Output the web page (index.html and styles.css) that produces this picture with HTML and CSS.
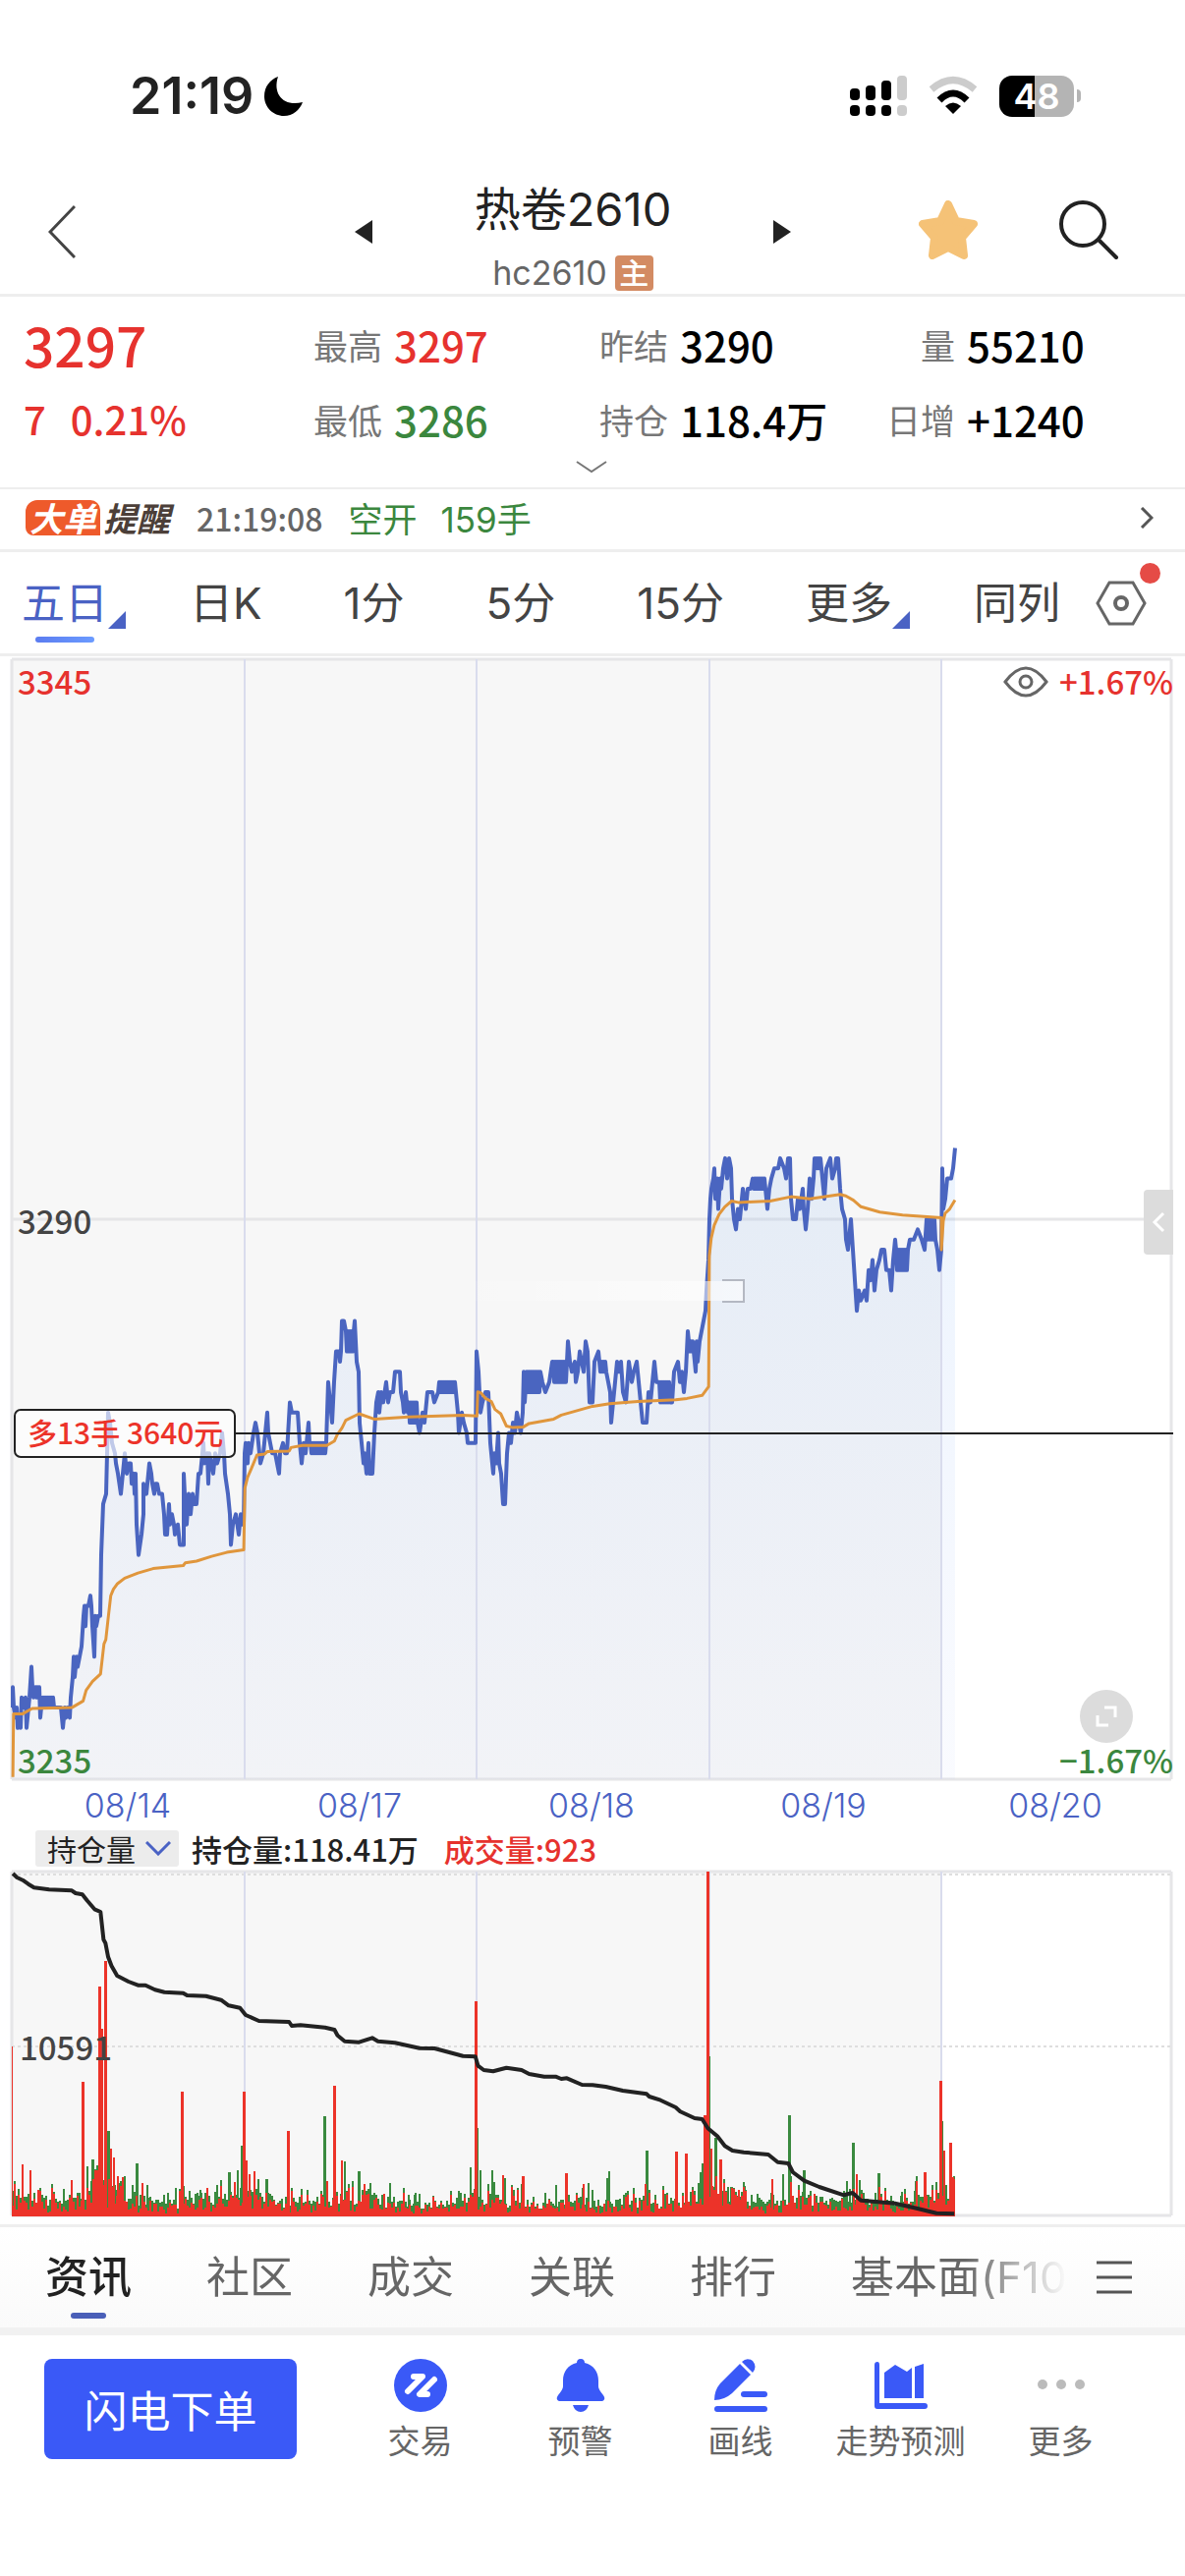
FILE: index.html
```html
<!DOCTYPE html>
<html lang="zh-CN">
<head>
<meta charset="utf-8">
<meta name="viewport" content="width=device-width">
<title>热卷2610</title>
<link rel="stylesheet" href="styles.css">
</head>
<body>
<div class="status">
  <div class="status-side">
    <span class="clock">21:19</span>
    <svg width="40" height="40" viewBox="0 0 40 40"><path d="M14 0C8 18 20 31 39 26C36 34 29 40 20 40C9 40 0 31 0 20C0 10 6 3 14 0Z"/></svg>
  </div>
  <div class="status-side status-right">
    <svg width="58" height="42" viewBox="0 0 58 42"><g><rect x="0" y="13" width="10" height="12" rx="4"/><rect x="16" y="10" width="10" height="15" rx="4"/><rect x="32" y="5" width="10" height="20" rx="4"/><rect x="0" y="30" width="10" height="11" rx="4"/><rect x="16" y="30" width="10" height="11" rx="4"/><rect x="32" y="30" width="10" height="11" rx="4"/></g><g fill="#ccc"><rect x="48" y="0" width="10" height="25" rx="4"/><rect x="48" y="30" width="10" height="11" rx="4"/></g></svg>
    <svg width="50" height="42" viewBox="0 0 50 42"><g fill="none" stroke-width="7"><path d="M3 14Q25-5 47 14" stroke="#ccc"/><path d="M11 25Q25 11 39 25" stroke="#000"/></g><path d="M25 39L17 31Q25 24 33 31Z"/></svg>
    <div class="battery">48</div>
  </div>
</div>

<header class="top">
  <button class="icon-btn back" aria-label="返回"><svg width="28" height="56" viewBox="0 0 28 56"><path d="M27 2L2 28L27 54" fill="none" stroke="#444" stroke-width="3"/></svg></button>
  <div class="switcher">
    <button class="icon-btn" aria-label="上一个"><svg width="18" height="24" viewBox="0 0 18 24"><path d="M18 0V24L0 12Z" fill="#222"/></svg></button>
    <div class="names">
      <h1>热卷2610</h1>
      <p>hc2610 <span class="main-tag">主</span></p>
    </div>
    <button class="icon-btn" aria-label="下一个"><svg width="18" height="24" viewBox="0 0 18 24"><path d="M0 0V24L18 12Z" fill="#222"/></svg></button>
  </div>
  <button class="icon-btn star" aria-label="自选"><svg width="60" height="60" viewBox="0 0 60 60"><path d="M30 4L38 21L56 24L44 38L46 56L30 48L14 56L16 38L4 24L22 21Z" fill="#f5c277" stroke="#f5c277" stroke-width="8" stroke-linejoin="round"/></svg></button>
  <button class="icon-btn" aria-label="搜索"><svg width="62" height="62" viewBox="0 0 62 62"><g fill="none" stroke="#222" stroke-width="4" stroke-linecap="round"><circle cx="25" cy="25" r="22"/><path d="M42 42L59 59"/></g></svg></button>
</header>

<section class="quote">
  <dl class="grid">
    <div class="last up">3297</div>
    <div><dt>最高</dt><dd class="up">3297</dd></div>
    <div><dt>昨结</dt><dd>3290</dd></div>
    <div class="end"><dt>量</dt><dd>55210</dd></div>
    <div class="chg up"><span>7</span><span>0.21%</span></div>
    <div><dt>最低</dt><dd class="down">3286</dd></div>
    <div><dt>持仓</dt><dd>118.4万</dd></div>
    <div class="end"><dt>日增</dt><dd>+1240</dd></div>
  </dl>
  <button class="icon-btn unfold" aria-label="展开"><svg width="32" height="13" viewBox="0 0 32 13"><path d="M1 1L16 11L31 1" fill="none" stroke="#777" stroke-width="2"/></svg></button>
</section>

<a class="alert" href="#orders">
  <span class="logo"><b class="logo-a">大单</b><b class="logo-b">提醒</b></span>
  <span class="time">21:19:08</span>
  <span class="down">空开</span>
  <span class="down">159手</span>
  <svg class="go" width="14" height="22" viewBox="0 0 14 22"><path d="M2 1L12 11L2 21" fill="none" stroke="#555" stroke-width="3"/></svg>
</a>

<div class="periods">
  <div class="period-list">
    <button class="on fold">五日</button><button>日K</button><button>1分</button><button>5分</button><button>15分</button><button class="fold">更多</button><button>同列</button>
  </div>
  <button class="icon-btn gear" aria-label="设置"><svg width="52" height="46" viewBox="0 0 52 46"><g fill="none" stroke="#666"><path d="M14 2H38L50 23L38 44H14L2 23Z" stroke-width="3"/><circle cx="26" cy="23" r="6" stroke-width="4"/></g></svg></button>
</div>

<main>
  <div class="price">
    <svg class="plot" viewBox="0 667 1206 1145" role="img" aria-label="五日分时">
      <defs>
        <linearGradient id="area" x1="0" y1="1170" x2="0" y2="1810" gradientUnits="userSpaceOnUse"><stop offset="0" stop-color="#3c8cf0" stop-opacity=".1"/><stop offset="1" stop-color="#5078f0" stop-opacity=".03"/></linearGradient>
        <linearGradient id="streak"><stop offset="0" stop-color="#fff" stop-opacity="0"/><stop offset="1" stop-color="#fff" stop-opacity=".6"/></linearGradient>
      </defs>
      <rect x="12" y="669" width="946" height="1141" fill="#f7f7f7"/>
      <path class="rule" d="M12 670H1192M12 1810H1192M12 1240H1192M12 670V1810M1192 670V1810"/>
      <path id="fill" fill="url(#area)"/>
      <path class="day-rule" d="M249 670V1810M485 670V1810M722 670V1810M958 670V1810"/>
      <path id="line" class="line"/>
      <path id="avg" class="avg"/>
      <rect x="450" y="1303" width="306" height="20" fill="url(#streak)"/>
      <path d="M735 1302H758M757 1302V1324M735 1324H758" stroke="#b4b8c2" stroke-width="2" fill="none"/>
      <path d="M240 1458H1194" stroke="#222" stroke-width="2"/>
      <rect x="15" y="1434" width="224" height="48" rx="6" fill="#fff" fill-opacity=".65" stroke="#222" stroke-width="2"/>
      <text x="28" y="1469" class="pos">多13手 3640元</text>
      <text x="18" y="706" class="axis up">3345</text>
      <text x="18" y="1255" class="axis">3290</text>
      <text x="18" y="1804" class="axis down">3235</text>
      <text x="1194" y="706" class="axis up right">+1.67%</text>
      <text x="1194" y="1804" class="axis down right">−1.67%</text>
      <g fill="none" stroke="#666" stroke-width="3"><path d="M1023 693Q1044 665 1065 693Q1044 721 1023 693Z"/><circle cx="1044" cy="693" r="6"/></g>
    </svg>
    <button class="handle" aria-label="侧栏"><svg width="14" height="22" viewBox="0 0 14 22"><path d="M12 2L3 11L12 20" fill="none" stroke="#fff" stroke-width="3"/></svg></button>
    <button class="expand" aria-label="全屏"><svg width="22" height="22" viewBox="0 0 22 22"><path d="M9 2H20V12M2 10V20H13" fill="none" stroke="#fff" stroke-width="3"/></svg></button>
  </div>
  <div class="days"><span>08/14</span><span>08/17</span><span>08/18</span><span>08/19</span><span>08/20</span></div>
  <div class="vol-head">
    <label class="chip"><select aria-label="指标"><option>持仓量</option></select><svg width="26" height="15" viewBox="0 0 26 15"><path d="M1 1L13 13L25 1" fill="none" stroke="#4a62c4" stroke-width="3"/></svg></label>
    <span>持仓量:118.41万</span>
    <span class="up">成交量:923</span>
  </div>
  <svg class="plot" viewBox="0 1903 1206 360" role="img" aria-label="成交量">
    <rect x="12" y="1904" width="946" height="351" fill="#f7f7f7"/>
    <path class="rule" d="M12 1904H1192M12 2254H1192M12 1904V2254M1192 1904V2254"/>
    <path class="dots" d="M12 1907H1192M12 2082H1192"/>
    <path class="day-rule" d="M249 1904V2254M485 1904V2254M722 1904V2254M958 1904V2254"/>
    <path id="volDown" fill="#3a8a3f"/>
    <path id="volUp" fill="#ec3329"/>
    <path id="oi" class="oi"/>
    <text x="20" y="2096" class="axis">10591</text>
  </svg>
</main>

<nav class="sections">
  <div class="section-list">
    <a class="on" href="#news">资讯</a><a href="#community">社区</a><a href="#trades">成交</a><a href="#related">关联</a><a href="#rank">排行</a><a href="#f10">基本面(F10)</a>
  </div>
  <button class="icon-btn" aria-label="菜单"><svg width="36" height="34" viewBox="0 0 36 34"><path d="M0 2H36M0 17H36M0 32H36" stroke="#555" stroke-width="3"/></svg></button>
</nav>

<footer class="actions">
  <button class="order">闪电下单</button>
  <a href="#trade"><svg width="54" height="54" viewBox="0 0 54 54"><circle cx="27" cy="27" r="27" fill="#3a59f7"/><path d="M20 18H29L14 33M41 21L26 36H34" fill="none" stroke="#fff" stroke-width="6" stroke-linecap="round" stroke-linejoin="round"/></svg>交易</a>
  <a href="#warn"><svg width="54" height="54" viewBox="0 0 54 54"><path d="M27 0C30 0 31 2 31 4C40 6 45 13 45 22V28Q45 31 50 37C53 41 50 43 48 43H6C4 43 1 41 4 37Q9 31 9 28V22C9 13 14 6 23 4C23 2 24 0 27 0ZM19 47H35Q33 54 27 54Q21 54 19 47Z" fill="#3a59f7"/></svg>预警</a>
  <a href="#draw"><svg width="54" height="54" viewBox="0 0 54 54"><g fill="#3a59f7"><path d="M26 5L37 16L18 35Q10 42 0 42Q0 32 6 25ZM28 3Q33-2 39 2Q44 8 39 14Z"/><rect x="27" y="33" width="27" height="6" rx="3"/><rect x="0" y="48" width="54" height="6" rx="3"/></g></svg>画线</a>
  <a href="#trend"><svg width="54" height="54" viewBox="0 0 54 54"><g fill="#3a59f7"><path d="M0 6Q0 3 3 3Q5 3 5 6V45H51Q54 45 54 48Q54 51 51 51H3Q0 51 0 48Z"/><path d="M10 14L21 6L33 13L38 9V40H10Z"/><path d="M41 8L50 5V40H41Z"/></g></svg>走势预测</a>
  <a href="#more"><svg width="54" height="54" viewBox="0 0 54 54"><g fill="#bbb"><circle cx="8" cy="26" r="5"/><circle cx="27" cy="26" r="5"/><circle cx="46" cy="26" r="5"/></g></svg>更多</a>
</footer>
<script src="chart.js"></script>
</body>
</html>
```
FILE: styles.css
```css
* { box-sizing: border-box; }
body, h1, p, dl, dd { margin: 0; }
body {
  background: #fff;
  color: #222;
  font-family: Inter, "Noto Sans CJK SC", sans-serif;
}
button, select { font: inherit; color: inherit; border: 0; background: none; padding: 0; }
a { color: inherit; text-decoration: none; }
svg { display: block; flex: none; }
.icon-btn { display: flex; position: relative; }
.up { color: #e6322e; fill: #e6322e; }
.down { color: #3b873e; fill: #3b873e; }

.status { display: flex; justify-content: space-between; align-items: center; height: 182px; padding: 14px 113px 0 132px; }
.status-side { display: flex; align-items: center; gap: 11px; }
.status-right { gap: 22px; }
.clock { font-size: 52px; font-weight: 600; line-height: 60px; }
.battery {
  position: relative; width: 76px; height: 42px; border-radius: 13px;
  background: linear-gradient(90deg, #000 48%, #b4b4b4 48%);
  color: #fff; font-size: 36px; font-weight: 600; line-height: 42px; text-align: center;
}
.battery::after { content: ""; position: absolute; right: -7px; top: 14px; width: 4px; height: 13px; border-radius: 0 4px 4px 0; background: #b4b4b4; }

.top { display: flex; align-items: center; height: 120px; padding: 0 67px 14px 49px; border-bottom: 3px solid #eee; }
.top .star { margin-right: 82px; }
.switcher { flex: 1; display: flex; align-items: center; justify-content: center; gap: 104px; padding: 4px 0 0 220px; margin-right: 66px; }
.back { padding-top: 4px; }
.names { text-align: center; padding-top: 6px; white-space: nowrap; }
.names h1 { font-size: 47px; font-weight: 400; line-height: 68px; }
.names p { display: flex; justify-content: center; align-items: center; gap: 8px; font-size: 34px; line-height: 40px; color: #666; margin-top: 11px; }
.main-tag { width: 39px; height: 36px; border-radius: 4px; background: #d38b63; color: #fff; font-size: 30px; font-weight: 500; line-height: 36px; text-align: center; }

.quote { padding: 10px 106px 14px 24px; border-bottom: 2px solid #eee; }
.grid { display: grid; grid-template-columns: 295px 291px 1fr auto; grid-auto-rows: 76px; align-items: center; }
.grid > div { display: flex; align-items: center; gap: 12px; font-family: "Noto Sans CJK SC", sans-serif; font-size: 42px; font-weight: 500; }
.grid dt { font-size: 35px; font-weight: 400; color: #777; }
.grid dd:not([class]) { color: #000; }
.grid .end { display: grid; grid-template-columns: 1fr 116px; text-align: right; }
.grid .end dd { text-align: left; }
.grid .last { font-size: 55px; }
.grid .chg { gap: 25px; font-size: 40px; }
.quote .unfold { margin: 5px auto 0; left: 40px; width: 32px; }

.alert { display: flex; align-items: center; height: 64px; padding: 0 32px 4px 26px; border-bottom: 3px solid #eee; font-size: 35px; }
.logo { display: flex; align-items: center; gap: 3px; font-family: "Noto Sans CJK SC", sans-serif; font-style: italic; font-size: 34px; line-height: 36px; font-weight: 700; }
.logo-a { width: 76px; text-align: center; color: #fff; background: #ee5a2b; border-radius: 12px 10px 0 8px; font-weight: 700; }
.logo-b { color: #4c3f39; font-weight: 700; }
.time { margin: 0 26px 0 27px; font-family: "Noto Sans CJK SC", sans-serif; font-size: 32px; font-weight: 500; color: #666; }
.time + .down { margin-right: 24px; }
.go { margin-left: auto; }

.periods { display: flex; align-items: center; gap: 36px; height: 106px; padding: 0 39px 0 22px; border-bottom: 3px solid #eee; }
.period-list { flex: 1; display: flex; justify-content: space-between; font-size: 44px; line-height: 64px; color: #444; }
.period-list button { position: relative; }
.period-list .on { color: #4a62c4; }
.on::before { content: ""; position: absolute; left: 14px; bottom: -8px; width: 60px; height: 6px; border-radius: 3px; background: linear-gradient(90deg, #5b7cf0, #6b9bff); }
.fold::after { content: ""; position: absolute; right: -18px; bottom: 6px; border-left: 18px solid transparent; border-bottom: 18px solid #4a62c4; }
.gear::after { content: ""; position: absolute; right: -14px; top: -18px; width: 21px; height: 21px; border-radius: 50%; background: #e54b46; }

.price { position: relative; }
.plot { width: 100%; height: auto; overflow: visible; }
.rule { fill: none; stroke: #e6e6e8; stroke-width: 3; }
.day-rule { stroke: #d9dced; stroke-width: 2; }
.dots { stroke: #dedede; stroke-width: 2; stroke-dasharray: 3 3; }
.line { fill: none; stroke: #4a65c0; stroke-width: 4; stroke-linejoin: round; }
.avg { fill: none; stroke: #e0963c; stroke-width: 3; stroke-linejoin: round; }
.oi { fill: none; stroke: #222; stroke-width: 4; stroke-linejoin: round; }
.axis { font: 500 33px "Noto Sans CJK SC", sans-serif; }
.axis:not(.up):not(.down) { fill: #444; }
.right { text-anchor: end; }
.pos { font: 500 30px "Noto Sans CJK SC", sans-serif; fill: #ec3329; }
.handle, .expand { position: absolute; display: flex; align-items: center; justify-content: center; background: #dcdcdc; }
.handle { right: 12px; top: 543px; width: 30px; height: 66px; border-radius: 4px 0 0 4px; }
.expand { right: 53px; bottom: 39px; width: 54px; height: 54px; border-radius: 50%; }
.days { display: grid; grid-template-columns: repeat(5, 1fr); padding: 0 14px 0 12px; font-size: 34px; font-weight: 300; line-height: 50px; text-align: center; color: #4a62c4; }
.vol-head { display: flex; align-items: center; height: 41px; padding: 0 0 4px 36px; font: 500 31px/40px "Noto Sans CJK SC", sans-serif; }
.vol-head > span { margin-right: 26px; }
.chip { display: flex; align-items: center; gap: 10px; height: 37px; margin-right: 13px; padding: 0 8px 0 12px; border-radius: 3px; background: #ececec; }
.chip select { appearance: none; font: 400 30px/37px "Noto Sans CJK SC", sans-serif; }

.sections { display: flex; align-items: center; gap: 30px; height: 113px; padding: 0 54px 0 46px; border-top: 3px solid #eee; border-bottom: 8px solid #f1f1f1; background: linear-gradient(#fff, #fafafa); }
.section-list { flex: 1; min-width: 0; display: flex; gap: 76px; overflow: hidden; line-height: 102px; font-size: 44px; white-space: nowrap; color: #666; mask-image: linear-gradient(90deg, #000 90%, transparent); }
.section-list .on { position: relative; color: #222; font-weight: 500; }
.section-list .on::before { left: 26px; bottom: 9px; width: 36px; background: #4a5fb8; }

.actions { display: flex; align-items: flex-start; padding: 24px 45px 119px; }
.actions a { flex: 1; display: flex; flex-direction: column; align-items: center; gap: 6px; font-size: 33px; line-height: 48px; color: #666; white-space: nowrap; }
.order { width: 257px; height: 102px; margin-right: 44px; border-radius: 8px; background: #3a59f7; color: #fff; font-size: 44px; }
```
FILE: chart.js
```js
// Price series: "x price" pairs, price counted from 3200.
// "x1~x2 low high" marks a stretch where the price flips between two ticks.
const price = `13 42,13 44,14 42,16 41,17 42,18 40,20 41,21 40,22 43,24 42,26 43,27 40,29 42,30 43,32 46,33 44,34 43,36 44,37 43,38 44,39 43,40 44,41 41,42 42,
42~55 42 43,62 42,64 40,66 42,67 41,69 42,71 41,72 43,74 45,75 47,76 45,78 47,79 46,81 47,83 48,85 51,86 52,87 50,88 52,90 52,92 53,93 52,94 50,96 47,97 51,98 50,100 51,102 51,103 57,105 62,108 63,109 67,110 71,112 70,114 68,117 67,118 66,120 65,123 63,126 66,127 67,129 65,131 66,133 66,134 64,136 65,137 63,138 65,139 60,141 57,144 59,146 61,146 64,149 63,150 64,152 66,154 65,155 64,157 63,158 64,160 64,162 63,165 63,167 61,168 59,170 59,172 62,173 60,175 61,177 60,178 59,181 60,183 58,187 58,187 65,188 63,190 60,192 63,194 61,196 63,198 62,200 62,202 65,204 65,206 67,207 68,208 66,211 67,212 64,213 67,215 66,217 65,219 67,221 66,224 67,226 69,228 67,229 65,232 63,234 61,235 58,237 60,240 61,243 59,245 61,247 60,248 60,
249 67,250 68,252 66,253 68,255 67,258 69,260 70,262 69,263 68,265 66,268 67,270 69,272 71,273 69,275 68,277 67,280 67,282 66,284 65,285 67,288 68,290 67,292 67,295 72,297 71,303 71,305 68,307 66,309 68,311 67,314 70,315 68,316~332 67 68,334 74,336 72,338 70,340 74,342 77,345 77,346 76,347 77,348 80,350 80,352~360 77 79,361 80,363 76,365 75,366 70,368 68,370 66,371 67,373 65,375 68,376 65,379 65,381 69,383 72,385 73,386 71,388 73,390 72,393 74,395 72,397 73,400 73,402 75,407 75,408 73,410 72,411 71,413 73,415 71,416~425 70 72,427 69,430 71,432 70,434 72,435 73,440 73,442 72,446 73,447~464 73 74,466 71,467 69,470 71,472 70,475 69,476 68,484 68,485 77,
487 75,488 73,489 71,491 72,494 73,497 73,499 68,500 67,502 65,503 67,505 66,507 69,508 66,510 65,512 62,514 62,516 67,518 69,520 68,522 70,524 69,526 71,528 70,530 69,532 71,533 75,534 72,536~550 73 75,552 74,555 73,559 74,562 76,563~577 74 76,578 78,580 76,582 75,585 76,586 74,588 75,590 77,592 76,594 75,596 78,598 77,600 72,603 72,605 76,609 77,610~617 75 76,619 74,621 73,622 70,624 72,626 74,628 76,630 75,632 76,634 73,637 72,640 76,643 74,645 75,648 76,650 74,652 72,654 70,658 70,660 73,662 72,664 74,666 76,668 74,671~682 72 74,684 72,686 75,690 76,692 74,694 75,696 73,698 75,700 79,701~706 77 78,708 75,709 78,710 76,712 78,714 79,716 80,718 81,719 83,721 86,
722 90,723 92,724 93,726 94,727 95,728 92,730 94,731 91,733 94,734 93,736 95,738 96,740 94,742 96,744 95,745 92,747 90,749 89,751 91,753 90,756 93,759 91,761 93,764 93,766~779 93 94,781 91,783 93,785 94,788 95,792 95,794 96,798 95,800 94,802 96,804 96,805 92,807 90,810 90,812 92,814 91,817 93,818 91,820 89,822 91,824 94,826 92,828 94,829~836 95 96,837 94,839 92,841 95,845 96,847 94,850 95,851 96,853 96,855 93,857 91,860 90,861 88,863 87,866 90,868 87,870 84,872 81,874 83,876 82,880 83,882 82,884 85,886 84,888 86,890 83,892 85,895 86,897 87,900 87,902 85,905 85,907 83,909 86,911 88,912~924 85 87,926 88,930 88,934 89,938 88,941 87,943~952 88 90,954 87,956 85,958 87,959 95,960 91,962 92,964 94,968 94,970 95,972 97`;

const points = [];
for (const item of price.split(",")) {
  const [x, a, b] = item.trim().split(" ");
  if (x.includes("~")) {
    const [from, to] = x.split("~").map(Number);
    let high = false;
    for (let i = from; i <= to; i += 1) { high = !high; points.push([i, high ? +b : +a]); }
  } else points.push([+x, +a]);
}
const priceY = p => 1240 + (90 - p) * 10.355;
const line = points.map(([x, p]) => `${x} ${priceY(p).toFixed(1)}`).join("L");
document.getElementById("line").setAttribute("d", "M" + line);
document.getElementById("fill").setAttribute("d", `M13 1810L${line}V1810Z`);

// Averages and open interest, on a grid of 2.6 steps to a unit across.
const trace = (id, data, y) => document.getElementById(id).setAttribute("d",
  "M" + data.trim().split(/\s+/).map(s => { const [a, b] = s.split(","); return `${(a / 2.6).toFixed(1)} ${y(+b).toFixed(1)}`; }).join("L"));

trace("avg", `34,1518 36,1374 60,1374 85,1362 190,1360 220,1345 228,1320 245,1300 266,1283 275,1215 280,1205 287,1150 293,1105 300,1090 310,1078 330,1065 365,1053 405,1043 485,1036 490,1030 520,1026 560,1015 600,1006 645,1000 648,860 655,835 665,815 680,784 700,782 708,776 765,775 770,767 800,762 865,762 885,752 892,738 905,722 915,705 950,690 990,702 1080,697 1225,693 1262,695 1264,640 1272,642 1285,655 1300,662 1310,680 1325,690 1340,718 1355,721 1385,720 1400,712 1465,702 1485,693 1568,673
1613,667 1688,662 1788,658 1818,655 1858,648 1875,628 1877,330 1882,290 1890,260 1903,235 1918,218 1936,205 1953,208 2038,205 2093,195 2143,200 2223,190 2238,193 2258,203 2278,218 2328,230 2388,237 2491,243 2491,316 2496,250 2501,233 2513,223 2527,203`, b => 1130 + b / 2.24);

trace("oi", `34,378 45,390 60,398 75,410 90,421 130,427 190,430 200,438 218,442 230,460 250,487 266,495 274,580 279,590 286,632 295,660 310,690 340,708 365,719 385,719 410,733 435,740 485,743 495,750 545,752 585,764 605,781 635,788 650,810 685,828 765,831 772,843 795,841 860,848 885,855 893,872 912,890 950,893 985,880 1000,890 1045,895 1110,911 1150,912 1225,935 1258,937 1265,965 1280,978 1305,982 1340,971 1380,978 1400,990 1440,998 1470,998 1485,1005 1500,1003 1540,1023 1568,1024
1603,1029 1648,1041 1711,1051 1718,1059 1748,1070 1788,1092 1800,1105 1838,1125 1858,1128 1873,1156 1898,1180 1918,1210 1938,1224 1968,1229 2033,1236 2058,1259 2086,1263 2098,1290 2128,1316 2168,1335 2233,1360 2256,1353 2278,1376 2368,1385 2428,1401 2478,1415 2525,1417`, b => 1780 + b / 3);

// Volume: a low field of bars, busier after each open, with the large prints on top.
let seed = 11;
const random = () => (seed = (seed * 16807) % 2147483647) / 2147483647;
const busy = [[12, 34], [84, 22], [103, 62], [140, 12], [205, 14], [243, 36], [262, 20], [340, 20], [352, 26], [372, 20], [480, 30], [500, 24], [588, 12], [655, 8], [718, 60], [735, 44], [800, 16], [818, 14], [868, 24], [950, 32], [965, 26]];
let up = "", down = "";
const bar = (x, top, isUp, w = 2) => { const d = `M${x} ${top}h${w}V2255h-${w}Z`; if (isUp) up += d; else down += d; };
for (let x = 12; x < 971; x += 2) {
  const lift = Math.max(...busy.map(([c, h]) => h * Math.exp(-Math.abs(x - c) / 16)));
  const r = random();
  const h = 5 + (lift * .6 + 5) * (.3 + random()) + (r > .75 ? 14 * random() + 4 : 0);
  bar(x, Math.round(2255 - h - 7 * random()), false);
  bar(x, Math.round(2255 - h * (random() > .35 ? 1 : .45)), true);
}
`12 2082 r 1,22 2202 r,30 2208 r,38 2230 g,72 2218 r,83 2118 r 3,88 2204 g,93 2197 g 3,100 2021 r 3,103 2064 r,106 1995 r 3,109 2168 g 3,112 2186 r,115 2195 r,119 2214 r,124 2215 r,138 2201 g 3,144 2221 r,149 2223 g,184 2128 r 3,203 2228 g,210 2226 r,232 2210 g 3,238 2220 r,241 2208 g,245 2183 g,247 2128 r 3,250 2198 r,253 2212 r,258 2209 r,270 2217 g 3,292 2168 r 3,304 2235 g,329 2153 g 3,332 2219 r,339 2122 r 3,347 2198 r,350 2199 g,364 2209 g 3,370 2222 r,376 2221 g,390 2232 r,415 2233 g,421 2233 g,466 2229 g,483 2036 r 3,486 2165 g 1,488 2208 g,500 2208 g,511 2213 r,513 2216 g,531 2214 r 3,565 2223 g,575 2211 r 3,593 2222 r,617 2216 g,619 2209 g,657 2188 g 3,656 2222 r,687 2189 r 3,697 2191 r 3,714 2201 g,716 2152 r 3,719 1904 r 3,722 2092 g 1,723 2186 r,727 2175 g 3,732 2197 r 3,743 2225 g,751 2228 r,757 2224 g,785 2217 r,802 2152 g 3,804 2220 r,817 2208 g 3,828 2232 r,861 2219 g,867 2180 g 3,871 2212 r,893 2211 g 3,917 2230 g,931 2219 g 3,940 2210 r 3,952 2220 g,956 2117 r 3,959 2158 g 1,960 2188 r,966 2180 r 3,969 2215 r`
  .split(",").forEach(s => { const [x, top, c, w] = s.trim().split(" "); bar(+x, +top, c === "r", w ? +w : 2); });
document.getElementById("volUp").setAttribute("d", up);
document.getElementById("volDown").setAttribute("d", down);
```
